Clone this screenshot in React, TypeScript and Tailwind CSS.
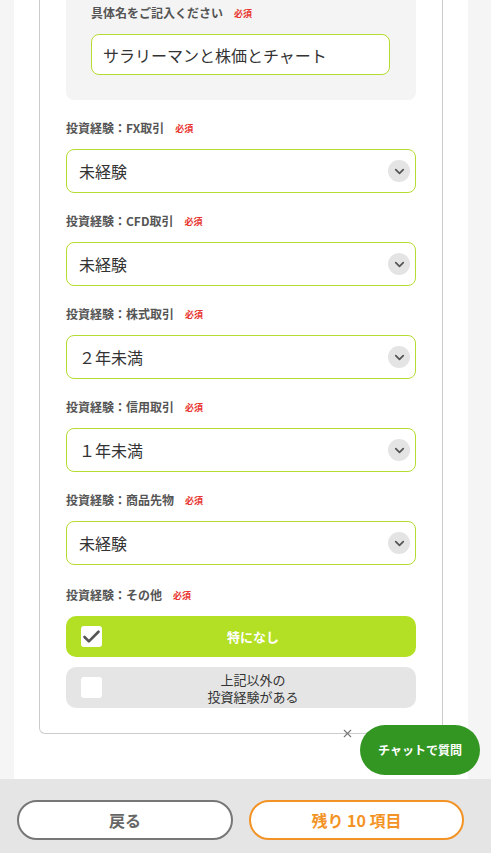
import { ChevronDown, Check, X } from "lucide-react";

const FONT = { fontFamily: '"Noto Sans CJK JP", "Noto Sans", sans-serif' };

const SELECTS = [
  { label: "投資経験：FX取引", value: "未経験" },
  { label: "投資経験：CFD取引", value: "未経験" },
  { label: "投資経験：株式取引", value: "２年未満" },
  { label: "投資経験：信用取引", value: "１年未満" },
  { label: "投資経験：商品先物", value: "未経験" },
];

const Label = ({ text }: { text: string }) => (
  <div className="flex items-center h-[18px] mb-3">
    <span className="text-[12px] font-bold text-[#555] leading-[18px]">{text}</span>
    <span className="ml-[11px] text-[9px] font-bold text-[#e8352f] leading-none">必須</span>
  </div>
);

const SelectBox = ({ value }: { value: string }) => (
  <div className="h-[44px] rounded-[8px] border border-[#b5dc32] bg-white flex items-center justify-between pl-3 pr-[5px]">
    <span className="text-[16px] text-[#333]">{value}</span>
    <span className="w-[22px] h-[22px] rounded-full bg-[#e4e4e4] flex items-center justify-center">
      <ChevronDown className="w-[15px] h-[15px] text-[#555]" strokeWidth={2.75} />
    </span>
  </div>
);

export default function App() {
  return (
    <div className="h-[853px] flex flex-col bg-[#f5f5f5] overflow-hidden" style={FONT}>
      <div className="relative flex-1 ml-[14px] w-[454px] bg-white px-[25px]">
        {/* form card */}
        <div className="border-x border-b border-[#cccccc] rounded-b-[6px] px-[26px] pb-[25px]">
          <div className="bg-[#f4f4f4] rounded-b-[8px] pl-[25px] pr-[26px] pt-1 pb-[25px]">
            <Label text="具体名をご記入ください" />
            <div className="h-[41px] rounded-[8px] border border-[#b5dc32] bg-white flex items-center px-[11px]">
              <span className="text-[16px] text-[#333]">サラリーマンと株価とチャート</span>
            </div>
          </div>

          {SELECTS.map((s) => (
            <div key={s.label} className="mt-[19px]">
              <Label text={s.label} />
              <SelectBox value={s.value} />
            </div>
          ))}

          <div className="mt-[21px]">
            <Label text="投資経験：その他" />
            <div className="relative h-[41px] rounded-[10px] bg-[#b3e024] flex items-center justify-center pl-[24px]">
              <span className="absolute left-[15px] top-[10px] w-[21px] h-[21px] rounded-[3px] bg-white flex items-center justify-center">
                <Check className="w-[22px] h-[22px] text-[#555]" strokeWidth={3} />
              </span>
              <span className="text-[13px] font-bold text-white">特になし</span>
            </div>
            <div className="relative mt-[10px] h-[41px] rounded-[10px] bg-[#e5e5e5] flex items-center justify-center pl-[24px]">
              <span className="absolute left-[15px] top-[10px] w-[21px] h-[21px] rounded-[3px] bg-white" />
              <span className="text-[13px] text-[#333] text-center leading-[17px]">
                上記以外の
                <br />
                投資経験がある
              </span>
            </div>
          </div>
        </div>

        {/* chat */}
        <X className="absolute left-[327px] top-[727px] w-[13px] h-[13px] text-[#777]" strokeWidth={2} />
        <div className="absolute left-[346px] top-[725px] w-[120px] h-[50px] rounded-full bg-[#339622] flex items-center justify-center">
          <span className="text-[12px] font-bold text-white">チャットで質問</span>
        </div>
      </div>

      {/* footer */}
      <div className="h-[74px] bg-[#e5e5e5] flex items-start pt-[21px] pl-[17px] gap-4">
        <button className="w-[216px] h-[40px] rounded-full border-2 border-[#777] bg-white text-[16px] font-bold text-[#666]">
          戻る
        </button>
        <button className="w-[215px] h-[40px] rounded-full border-2 border-[#f39325] bg-white text-[16px] font-bold text-[#f39325]">
          残り 10 項目
        </button>
      </div>
    </div>
  );
}
